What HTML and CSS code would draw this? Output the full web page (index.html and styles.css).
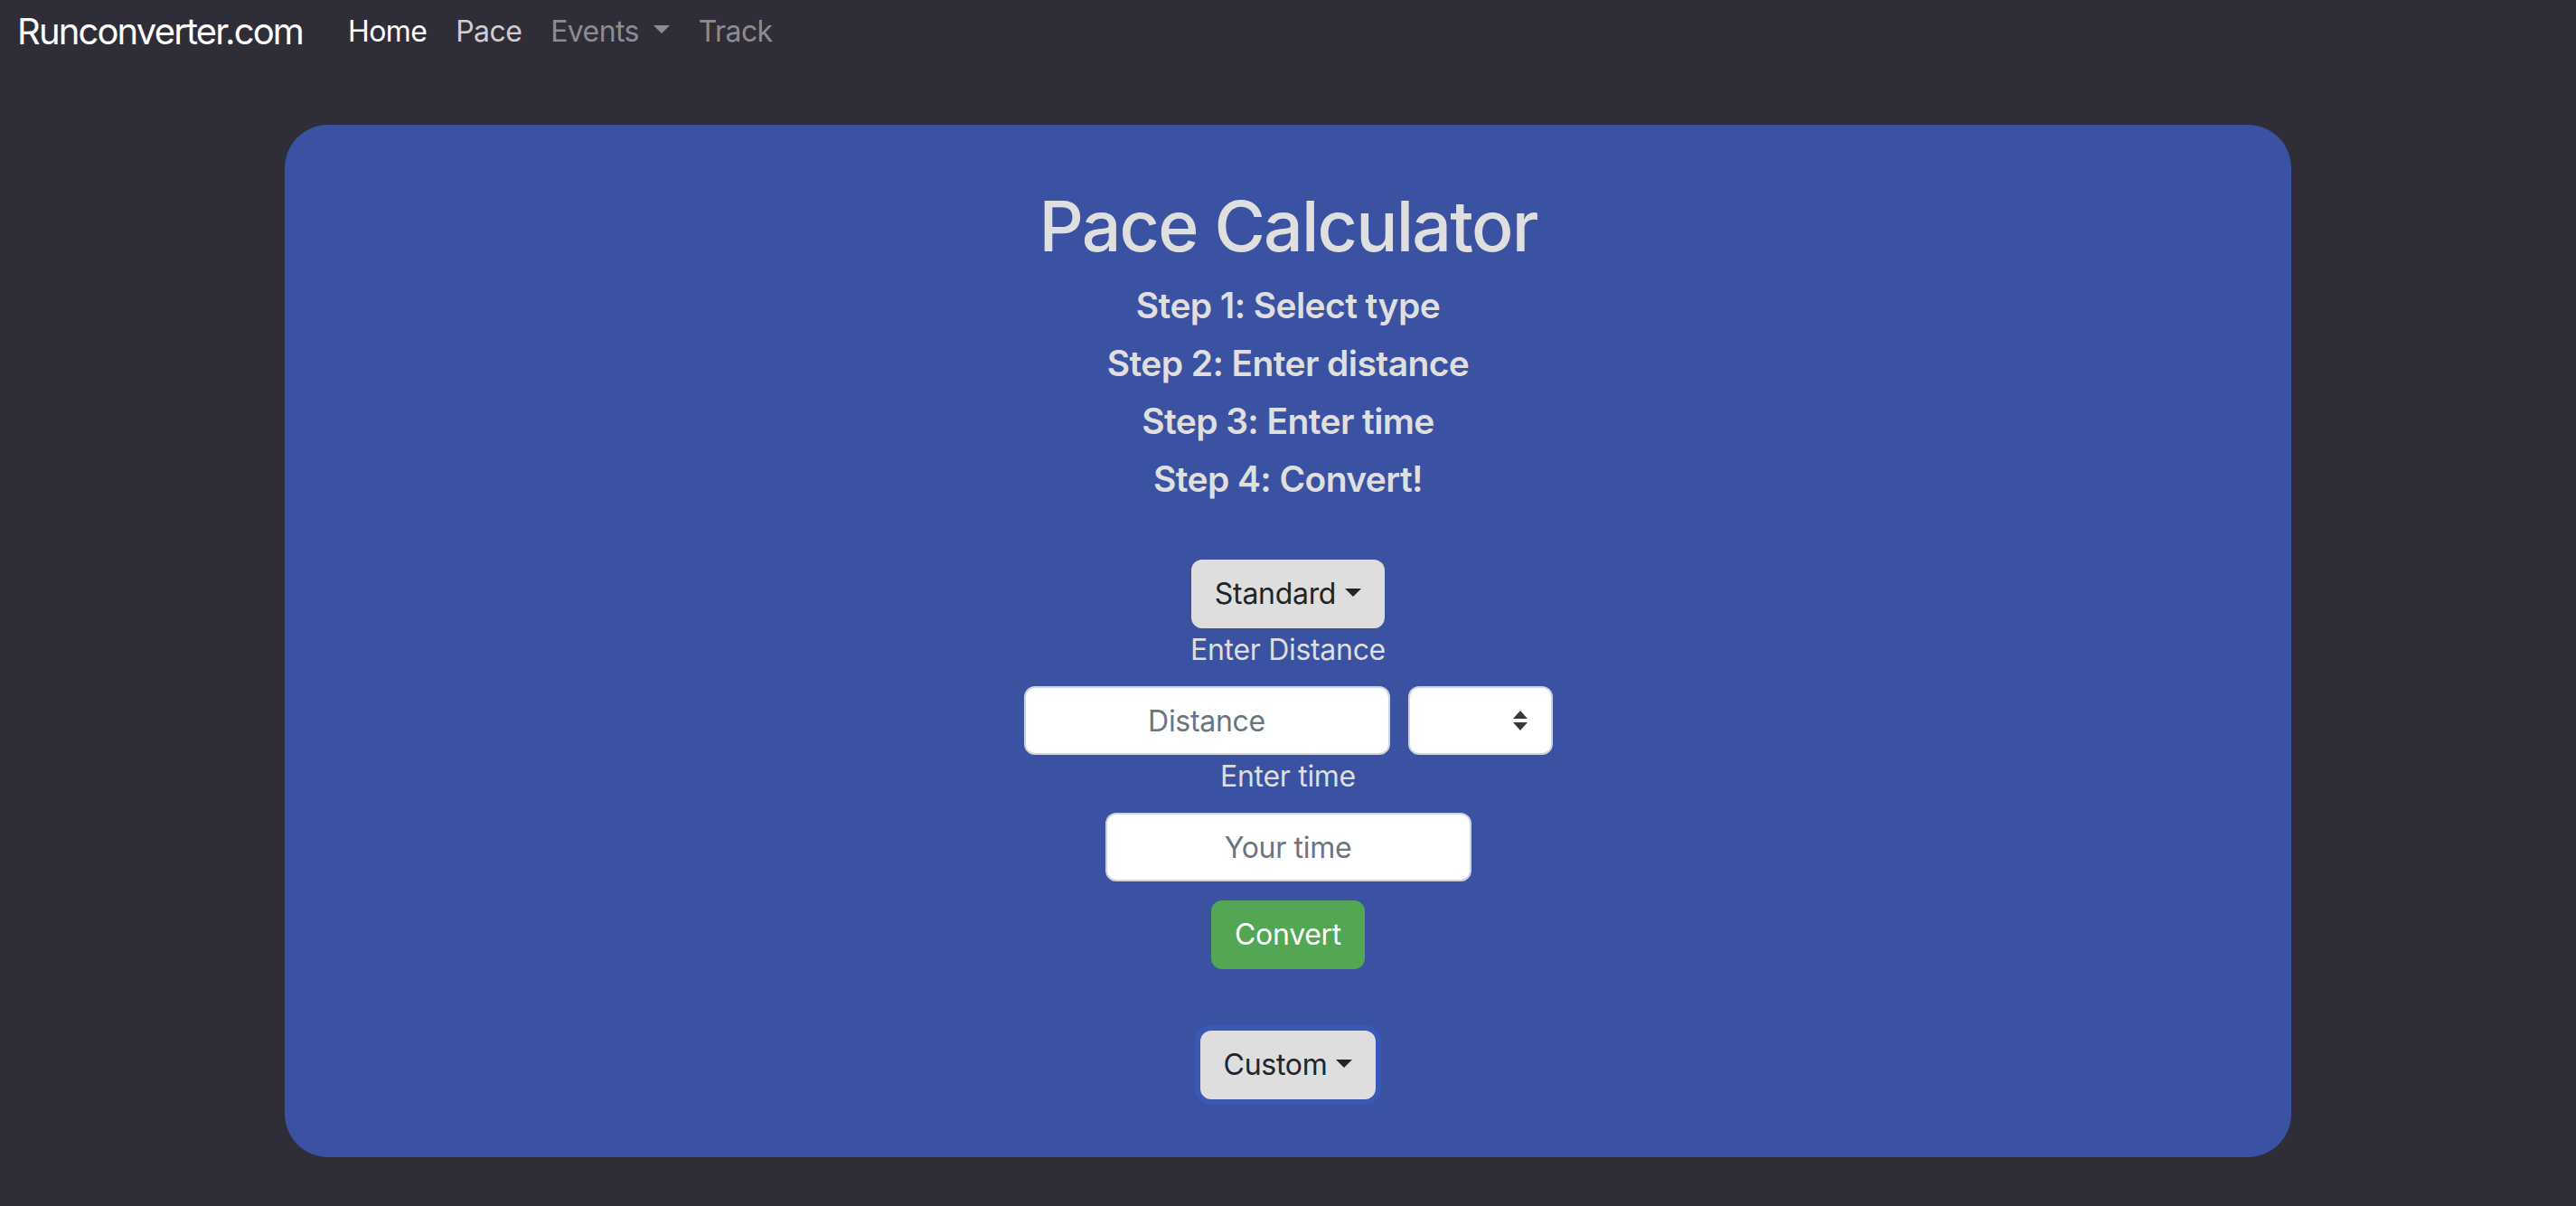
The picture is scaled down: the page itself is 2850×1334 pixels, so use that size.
FILE: index.html
```html
<!DOCTYPE html>
<html lang="en">
<head>
<meta charset="utf-8">
<title>Pace Calculator - Runconverter.com</title>
<link rel="stylesheet" href="styles.css">
</head>
<body>
<nav class="navbar">
  <a class="brand" href="#">Runconverter.com</a>
  <ul class="nav">
    <li><a class="nav-link active" href="#">Home</a></li>
    <li><a class="nav-link semi" href="#">Pace</a></li>
    <li><a class="nav-link dim" href="#">Events<span class="caret"></span></a></li>
    <li><a class="nav-link dim" href="#">Track</a></li>
  </ul>
</nav>
<main class="page">
  <section class="card">
    <h1 class="title">Pace Calculator</h1>
    <h5 class="step">Step 1: Select type</h5>
    <h5 class="step">Step 2: Enter distance</h5>
    <h5 class="step">Step 3: Enter time</h5>
    <h5 class="step">Step 4: Convert!</h5>
    <div class="form">
      <button class="btn btn-light" type="button">Standard<span class="caret"></span></button>
      <label class="label">Enter Distance</label>
      <div class="row">
        <input class="input input-dist" type="text" placeholder="Distance">
        <div class="select">
          <svg width="16" height="22" viewBox="0 0 16 22"><path d="M8 0 L16 9 L0 9 Z M0 13 L16 13 L8 22 Z" fill="#343a40"/></svg>
        </div>
      </div>
      <label class="label">Enter time</label>
      <input class="input input-time" type="text" placeholder="Your time">
      <button class="btn btn-success" type="button">Convert</button>
      <button class="btn btn-light btn-focus" type="button">Custom<span class="caret"></span></button>
    </div>
  </section>
</main>
</body>
</html>
```
FILE: styles.css
```css
* { box-sizing: border-box; }
html, body {
  margin: 0;
  padding: 0;
  background: #2f2d37;
  font-family: Inter, "Noto Sans", sans-serif;
  color: #dedede;
}
.navbar {
  display: flex;
  align-items: center;
  height: 70px;
  padding: 0 19px;
}
.brand {
  font-size: 40px;
  color: #ffffff;
  text-decoration: none;
  margin-right: 34px;
  letter-spacing: -1.85px;
  line-height: 1;
}
.nav {
  display: flex;
  list-style: none;
  margin: 0;
  padding: 0;
}
.nav-link {
  display: flex;
  align-items: center;
  padding: 0 16px;
  font-size: 32px;
  text-decoration: none;
  line-height: 1;
  letter-spacing: -0.6px;
}
.nav-link.active { color: #ffffff; }
.nav-link.semi { color: #cfced3; }
.nav-link.dim { color: #8d8c93; }
.caret {
  display: inline-block;
  width: 0;
  height: 0;
  margin-left: 16px;
  border-top: 9px solid currentColor;
  border-left: 9px solid transparent;
  border-right: 9px solid transparent;
  position: relative;
  top: -3px;
}
.page {
  padding: 68px 0 56px;
  display: flex;
  justify-content: center;
}
.card {
  width: 2220px;
  background: #3a52a1;
  border-radius: 48px;
  padding: 64px 0 64px;
  display: flex;
  flex-direction: column;
  align-items: center;
  text-align: center;
}
.title {
  margin: 0 0 16px;
  font-size: 77px;
  line-height: 96px;
  font-weight: 500;
  color: #dfdfdf;
  letter-spacing: -1.8px;
}
.step {
  margin: 0 0 16px;
  font-size: 39px;
  line-height: 48px;
  font-weight: 600;
  color: #dfdfdf;
  letter-spacing: -0.6px;
}
.form {
  margin-top: 49px;
  display: flex;
  flex-direction: column;
  align-items: center;
}
.btn {
  font-family: inherit;
  font-size: 32px;
  line-height: 48px;
  padding: 12px 24px;
  border: 2px solid transparent;
  border-radius: 12px;
  display: inline-flex;
  align-items: center;
  letter-spacing: -0.3px;
}
.btn-light {
  background: #dedede;
  color: #212529;
  height: 76px;
}
.btn-light .caret { margin-left: 10px; top: -2px; }
.btn-success {
  background: #53a653;
  color: #ffffff;
  margin-top: 21px;
}
.btn-focus {
  margin-top: 68px;
  box-shadow: 0 0 0 6px #3a58b6;
}
.label {
  font-size: 32px;
  line-height: 48px;
  color: #dedede;
  margin-bottom: 16px;
  letter-spacing: -0.3px;
}
.row {
  display: flex;
  gap: 20px;
}
.input {
  height: 76px;
  width: 405px;
  border: 2px solid #ced4da;
  border-radius: 12px;
  background: #ffffff;
  font-family: inherit;
  font-size: 32px;
  text-align: center;
  color: #212529;
  padding: 0 24px;
  letter-spacing: -0.3px;
}
.input::placeholder { color: #6c757d; }
.select {
  width: 160px;
  height: 76px;
  border: 2px solid #ced4da;
  border-radius: 12px;
  background: #ffffff;
  display: flex;
  align-items: center;
  justify-content: flex-end;
  padding-right: 26px;
}
```
